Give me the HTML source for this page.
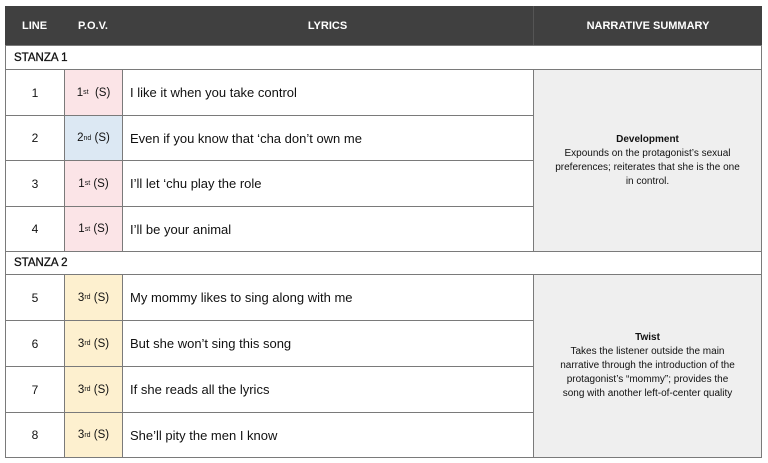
<!DOCTYPE html>
<html><head><meta charset="utf-8"><style>
body{margin:0;width:768px;height:463px;background:#fff;font-family:"Liberation Sans",sans-serif;position:relative;overflow:hidden}
.c{position:absolute;box-sizing:border-box;display:flex;align-items:center;justify-content:center;color:#111}
.h{background:#404040;color:#fff;font-size:11px;font-weight:bold;top:6px;height:39px}
.b{border:1px solid #7a7a7a}
.l{justify-content:flex-start;padding-left:7px;font-size:13px}
.p{font-size:11.5px}
sup{font-size:7px;vertical-align:5px}
.s{text-align:center;flex-direction:column;font-size:10px;line-height:14px;background:#efefef}
.st{font-size:11.5px;justify-content:flex-start;padding-left:8px;-webkit-text-stroke:0.3px #111}
</style></head><body>
<div class="c h" style="left:5px;width:59px">LINE</div>
<div class="c h" style="left:64px;width:58px">P.O.V.</div>
<div class="c h" style="left:122px;width:411px">LYRICS</div>
<div class="c h" style="left:533px;width:229px;border-left:1px solid #555">NARRATIVE SUMMARY</div>

<div class="c b st" style="left:5px;top:45px;width:757px;height:25px">STANZA 1</div>
<div class="c b st" style="left:5px;top:251px;width:757px;height:24px">STANZA 2</div>

<div class="c b" style="left:5px;top:69px;width:60px;height:47px;font-size:12px">1</div>
<div class="c b p" style="left:64px;top:69px;width:59px;height:47px;background:#fbe4e7">1<sup>st</sup>&nbsp;&nbsp;(S)</div>
<div class="c b l" style="left:122px;top:69px;width:412px;height:47px">I like it when you take control</div>

<div class="c b" style="left:5px;top:115px;width:60px;height:46px;font-size:12px">2</div>
<div class="c b p" style="left:64px;top:115px;width:59px;height:46px;background:#dce8f3">2<sup>nd</sup>&nbsp;(S)</div>
<div class="c b l" style="left:122px;top:115px;width:412px;height:46px">Even if you know that ‘cha don’t own me</div>

<div class="c b" style="left:5px;top:160px;width:60px;height:47px;font-size:12px">3</div>
<div class="c b p" style="left:64px;top:160px;width:59px;height:47px;background:#fbe4e7">1<sup>st</sup>&nbsp;(S)</div>
<div class="c b l" style="left:122px;top:160px;width:412px;height:47px">I’ll let ‘chu play the role</div>

<div class="c b" style="left:5px;top:206px;width:60px;height:46px;font-size:12px">4</div>
<div class="c b p" style="left:64px;top:206px;width:59px;height:46px;background:#fbe4e7">1<sup>st</sup>&nbsp;(S)</div>
<div class="c b l" style="left:122px;top:206px;width:412px;height:46px">I’ll be your animal</div>

<div class="c b s" style="left:533px;top:69px;width:229px;height:183px"><b>Development</b>Expounds on the protagonist’s sexual<br>preferences; reiterates that she is the one<br>in control.</div>

<div class="c b" style="left:5px;top:274px;width:60px;height:47px;font-size:12px">5</div>
<div class="c b p" style="left:64px;top:274px;width:59px;height:47px;background:#fdf0cf">3<sup>rd</sup>&nbsp;(S)</div>
<div class="c b l" style="left:122px;top:274px;width:412px;height:47px">My mommy likes to sing along with me</div>

<div class="c b" style="left:5px;top:320px;width:60px;height:47px;font-size:12px">6</div>
<div class="c b p" style="left:64px;top:320px;width:59px;height:47px;background:#fdf0cf">3<sup>rd</sup>&nbsp;(S)</div>
<div class="c b l" style="left:122px;top:320px;width:412px;height:47px">But she won’t sing this song</div>

<div class="c b" style="left:5px;top:366px;width:60px;height:47px;font-size:12px">7</div>
<div class="c b p" style="left:64px;top:366px;width:59px;height:47px;background:#fdf0cf">3<sup>rd</sup>&nbsp;(S)</div>
<div class="c b l" style="left:122px;top:366px;width:412px;height:47px">If she reads all the lyrics</div>

<div class="c b" style="left:5px;top:412px;width:60px;height:46px;font-size:12px">8</div>
<div class="c b p" style="left:64px;top:412px;width:59px;height:46px;background:#fdf0cf">3<sup>rd</sup>&nbsp;(S)</div>
<div class="c b l" style="left:122px;top:412px;width:412px;height:46px">She’ll pity the men I know</div>

<div class="c b s" style="left:533px;top:274px;width:229px;height:184px"><b>Twist</b>Takes the listener outside the main<br>narrative through the introduction of the<br>protagonist’s “mommy”; provides the<br>song with another left-of-center quality</div>
</body></html>
